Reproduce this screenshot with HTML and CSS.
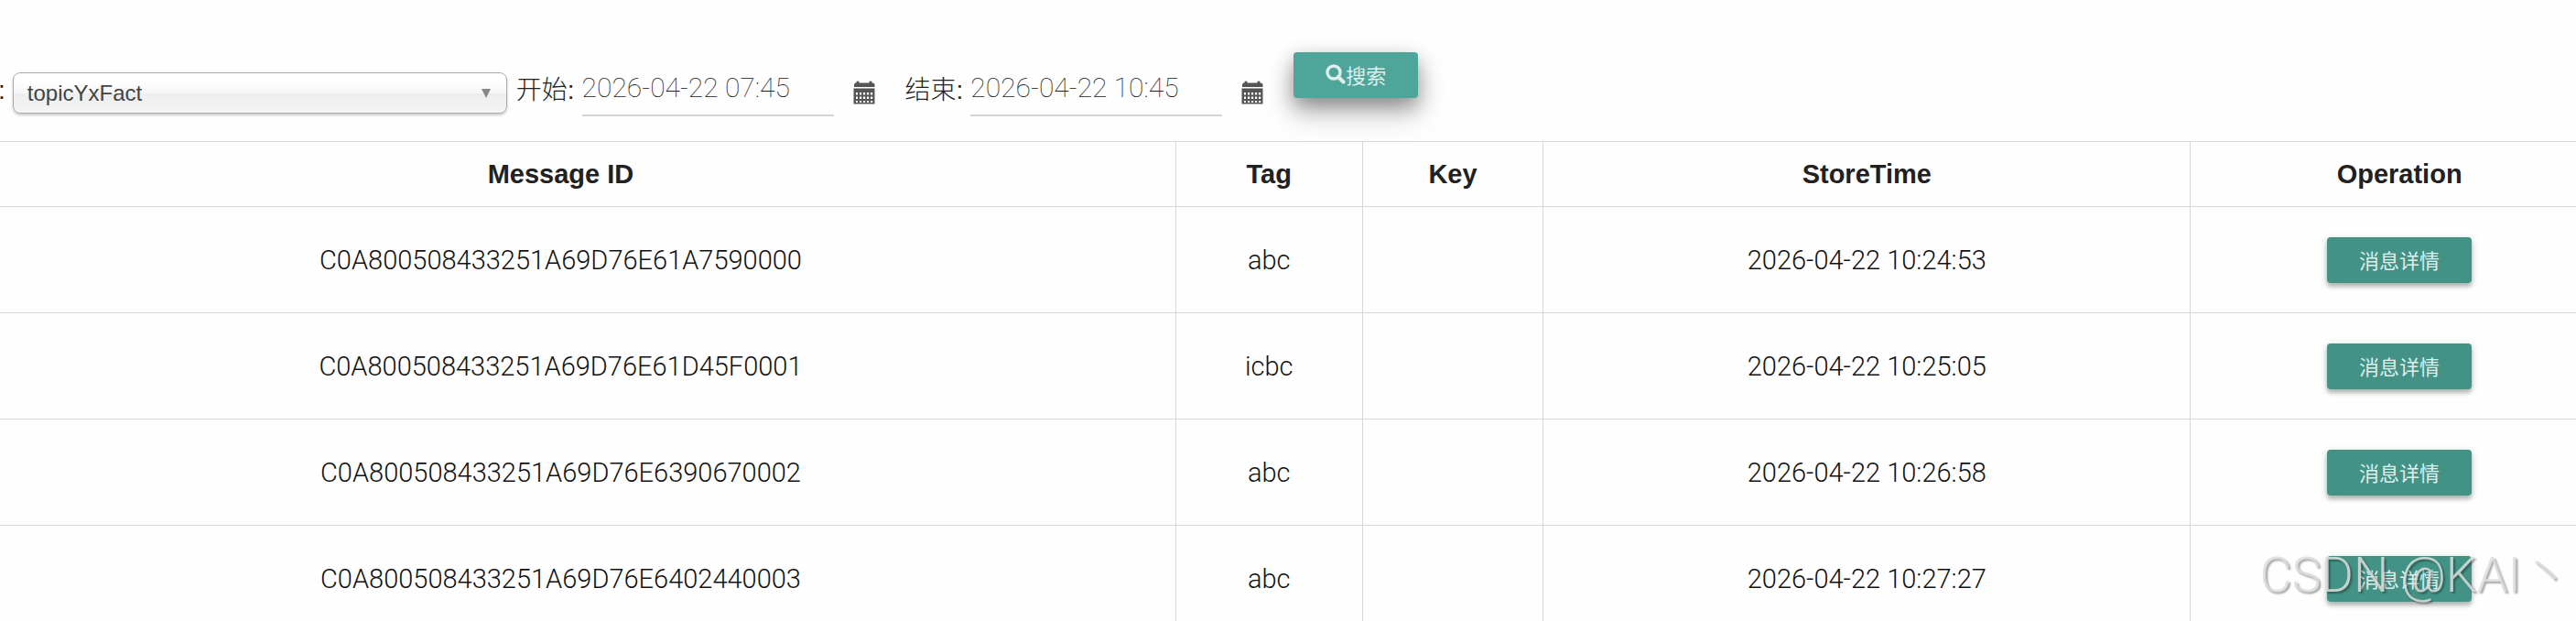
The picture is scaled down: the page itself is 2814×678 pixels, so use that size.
FILE: index.html
```html
<!DOCTYPE html>
<html lang="zh-CN">
<head>
    <meta charset="UTF-8">
    <meta name="viewport" content="width=device-width, initial-scale=1.0">
    <title>Message</title>
    <link rel="stylesheet" href="styles.css">
</head>
<body>
    <!-- shared icons -->
    <svg class="icon-defs" aria-hidden="true">
        <symbol id="icon-calendar" viewBox="0 0 24 26">
            <path d="M1 7V4.500Q1 2.500 3 2.500H3.500V1.500Q3.500 .5 5 .5T6.500 1.500V2.500H17.500V1.500Q17.500 .5 19 .5T20.500 1.500V2.500H21Q23.500 2.500 23.500 4.500V7Z"/>
            <path fill-rule="evenodd" d="M.5 8.500H23.500V25.500H.5ZM3 13v2.500h2V13ZM7 13v2.500h2.200V13ZM11 13v2.500h2.200V13ZM15 13v2.500h2.200V13ZM19 13v2.500h2.200V13ZM3 17.500v2.500h2V17.500ZM7 17.500v2.500h2.200V17.500ZM11 17.500v2.500h2.200V17.500ZM15 17.500v2.500h2.200V17.500ZM19 17.500v2.500h2.200V17.500ZM3 22v2h2V22ZM7 22v2h2.200V22ZM11 22v2h2.200V22ZM15 22v2h2.200V22ZM19 22v2h2.200V22Z"/>
        </symbol>
        <symbol id="icon-search" viewBox="0 0 22 22">
            <circle cx="9" cy="9" r="7" fill="none" stroke="currentColor" stroke-width="3.400"/>
            <path d="M14 14L19.500 19.500" fill="none" stroke="currentColor" stroke-width="4" stroke-linecap="round"/>
        </symbol>
    </svg>

    <form class="toolbar" onsubmit="return false">
        <label class="field-label" for="topic">:</label>
        <div class="topic-select">
            <select id="topic">
                <option>topicYxFact</option>
            </select>
        </div>

        <label class="field-label" for="begin">开始:</label>
        <input class="date-input" type="text" id="begin" value="2026-04-22 07:45">
        <button class="date-btn" type="button" aria-label="开始"><svg class="calendar"><use href="#icon-calendar"/></svg></button>

        <label class="field-label" for="end">结束:</label>
        <input class="date-input" type="text" id="end" value="2026-04-22 10:45">
        <button class="date-btn" type="button" aria-label="结束"><svg class="calendar"><use href="#icon-calendar"/></svg></button>

        <button class="btn btn-search" type="submit"><svg class="search"><use href="#icon-search"/></svg>搜索</button>
    </form>

    <div class="table-wrap">
        <table class="messages">
            <colgroup>
                <col class="col-id">
                <col class="col-tag">
                <col class="col-key">
                <col class="col-time">
                <col class="col-operation">
            </colgroup>
            <thead>
                <tr>
                    <th>Message ID</th>
                    <th>Tag</th>
                    <th>Key</th>
                    <th>StoreTime</th>
                    <th>Operation</th>
                </tr>
            </thead>
            <tbody>
                <tr>
                    <td>C0A800508433251A69D76E61A7590000</td>
                    <td>abc</td>
                    <td></td>
                    <td>2026-04-22 10:24:53</td>
                    <td><button class="btn" type="button">消息详情</button></td>
                </tr>
                <tr>
                    <td>C0A800508433251A69D76E61D45F0001</td>
                    <td>icbc</td>
                    <td></td>
                    <td>2026-04-22 10:25:05</td>
                    <td><button class="btn" type="button">消息详情</button></td>
                </tr>
                <tr>
                    <td>C0A800508433251A69D76E6390670002</td>
                    <td>abc</td>
                    <td></td>
                    <td>2026-04-22 10:26:58</td>
                    <td><button class="btn" type="button">消息详情</button></td>
                </tr>
                <tr>
                    <td>C0A800508433251A69D76E6402440003</td>
                    <td>abc</td>
                    <td></td>
                    <td>2026-04-22 10:27:27</td>
                    <td><button class="btn" type="button">消息详情</button></td>
                </tr>
            </tbody>
        </table>
    </div>

    <div class="watermark">CSDN @KAI丶</div>
</body>
</html>
```

FILE: styles.css
```css
* {
    margin: 0;
    padding: 0;
    box-sizing: border-box;
}

body {
    position: relative;
    height: 100vh;
    overflow: hidden;
    background: #fefefe;
    color: #111;
    font-family: Roboto, "Noto Sans CJK SC", sans-serif;
    font-size: 29px;
    font-weight: 300;
}

.icon-defs {
    display: none;
}

/* search bar */
.toolbar {
    display: flex;
    align-items: flex-start;
    margin-left: -2px;
    padding: 57px 0 27px;
}

.field-label {
    margin-top: 20px;
    padding-right: 8px;
    color: #212121;
    font-family: "Liberation Sans", "Noto Sans CJK SC", sans-serif;
    font-size: 28px;
    font-weight: 300;
    line-height: 44px;
}

.topic-select {
    position: relative;
    margin: 22px 10px 0 0;
}

.topic-select select {
    display: block;
    appearance: none;
    width: 540px;
    height: 45px;
    padding: 0 40px 0 15px;
    border: 1px solid #aaa;
    border-radius: 8px;
    background: linear-gradient(#fff 20%, #f6f6f6 50%, #eee 52%, #f4f4f4 100%);
    box-shadow: 0 2px 3px rgba(0, 0, 0, 0.2);
    color: #444;
    font-family: "Liberation Sans", sans-serif;
    font-size: 24px;
    font-weight: 400;
}

.topic-select::after {
    content: '';
    position: absolute;
    top: 18px;
    right: 18px;
    border: 5px solid transparent;
    border-top: 10px solid #888;
    border-bottom: 0;
    pointer-events: none;
}

.date-input {
    width: 275px;
    height: 70px;
    padding-top: 8px;
    border: none;
    border-bottom: 2px solid #d3d3d3;
    outline: none;
    background: transparent;
    color: #222;
    font-family: inherit;
    font-size: 30px;
    font-weight: 100;
}

.date-btn {
    margin: 31px 33px 0 21px;
    border: none;
    background: none;
    cursor: pointer;
}

.calendar {
    display: block;
    width: 24px;
    height: 26px;
    fill: #555;
}

.btn {
    display: inline-flex;
    align-items: center;
    height: 50px;
    padding: 0 35px 2px;
    border: none;
    border-radius: 4px;
    background: #429386;
    box-shadow: 0 4px 4px rgba(0, 0, 0, 0.2), 0 2px 8px rgba(0, 0, 0, 0.18);
    color: #dfeeec;
    font-family: "Noto Sans CJK SC", sans-serif;
    font-size: 22px;
    font-weight: 400;
    cursor: pointer;
    vertical-align: middle;
}

.btn-search {
    background: #4da699;
    box-shadow: 0 16px 32px rgba(0, 0, 0, 0.24), 0 8px 20px rgba(0, 0, 0, 0.3);
}

.search {
    width: 22px;
    height: 22px;
}

/* message list */
.table-wrap {
    margin: 0 -36px 0 -60px;
}

.messages {
    width: 100%;
    table-layout: fixed;
    border-collapse: collapse;
}

.col-id {
    width: 46.2%;
}

.col-tag {
    width: 7%;
}

.col-key {
    width: 6.8%;
}

.col-time {
    width: 24.3%;
}

.messages th,
.messages td {
    border: 1px solid #d8d8d8;
    text-align: center;
    vertical-align: middle;
}

.messages th {
    height: 71px;
    color: #212121;
    font-family: "Liberation Sans", sans-serif;
    font-weight: 700;
}

.messages td {
    height: 116px;
}

.watermark {
    position: absolute;
    right: 6px;
    bottom: 10px;
    color: rgba(222, 222, 222, 0.85);
    font-size: 54px;
    line-height: 80px;
    text-shadow: 2px 2px 2px rgba(0, 0, 0, 0.35);
    pointer-events: none;
}
```
